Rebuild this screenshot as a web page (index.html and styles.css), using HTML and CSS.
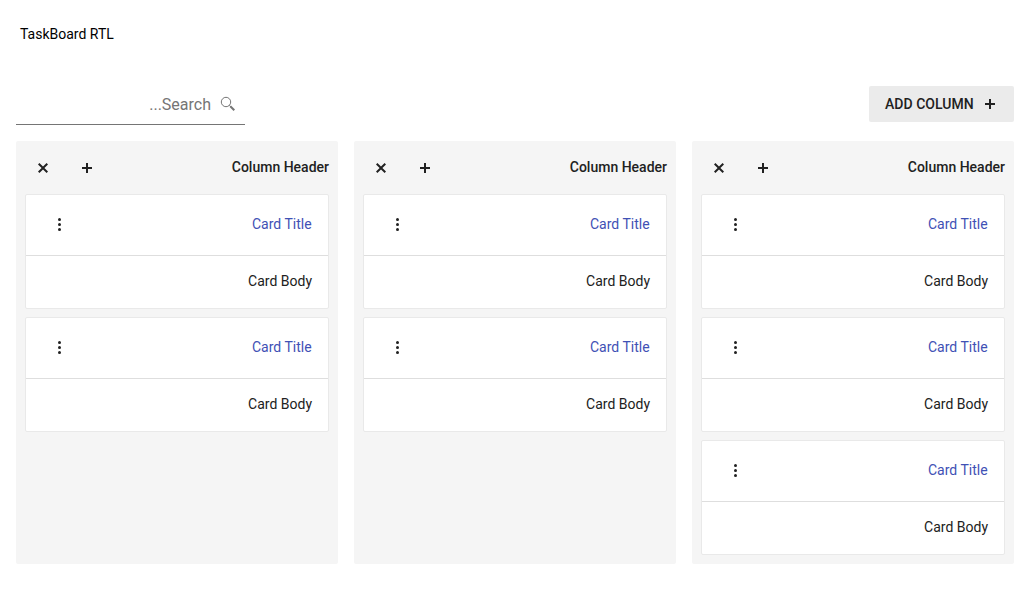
FILE: index.html
```html
<!DOCTYPE html>
<html lang="en">
<head>
<meta charset="utf-8">
<title>TaskBoard RTL</title>
<link rel="stylesheet" href="styles.css">
</head>
<body>
<svg class="sprite" aria-hidden="true">
  <symbol id="plus" viewBox="0 0 16 16"><path d="M7 3h2v4h4v2H9v4H7V9H3V7h4z"/></symbol>
  <symbol id="close" viewBox="0 0 16 16"><path d="M13 4.4 11.6 3 8 6.6 4.4 3 3 4.4 6.6 8 3 11.6 4.4 13 8 9.4l3.6 3.6 1.4-1.4L9.4 8z"/></symbol>
  <symbol id="more" viewBox="0 0 16 16"><circle cx="8.5" cy="3.5" r="1.5"/><circle cx="8.5" cy="8.5" r="1.5"/><circle cx="8.5" cy="13.5" r="1.5"/></symbol>
  <symbol id="search" viewBox="0 0 16 16"><circle cx="6" cy="6" r="4.7" fill="none" stroke="currentColor"/><path d="m9.3 9.3 1.4 1.4" fill="none" stroke="currentColor"/><path d="m10.3 10.3 4 4" fill="none" stroke="currentColor" stroke-width="2"/></symbol>
</svg>
<h1 class="title">TaskBoard RTL</h1>
<main class="taskboard">
  <div class="toolbar">
    <div class="search"><span>...Search</span><svg class="icon"><use href="#search"/></svg></div>
    <button class="add">ADD COLUMN<svg class="icon"><use href="#plus"/></svg></button>
  </div>
  <div class="columns" id="columns"></div>
</main>
<script src="board.js"></script>
</body>
</html>
```
FILE: board.js
```js
const icon = (name) => `<svg class="icon"><use href="#${name}"/></svg>`;
const card = `<article class="card">
  <header class="card-header">${icon('more')}<span>Card Title</span></header>
  <div class="card-body">Card Body</div>
</article>`;
document.getElementById('columns').innerHTML = [2, 2, 3].map((count) => `<section class="column">
  <header class="column-header"><span class="actions">${icon('close')}${icon('plus')}</span><span>Column Header</span></header>
  ${card.repeat(count)}
</section>`).join('');
```
FILE: styles.css
```css
* { box-sizing: border-box; }
body { margin: 0; background: #fff; color: #212121; font: 14px/20px Roboto, sans-serif; }
.sprite { display: none; }
.icon { width: 16px; height: 16px; fill: currentColor; flex: none; }
.title { margin: 0; padding: 24px 20px 0; height: 86px; font-size: 14px; line-height: 20px; font-weight: 400; color: #000; }
.taskboard { padding: 0 16px; }
.toolbar { display: flex; justify-content: space-between; height: 55px; }
.search { display: flex; justify-content: flex-end; align-items: center; gap: 9px; width: 229px; height: 39px; padding: 0 9px 2px 0; border-bottom: 1px solid #757575; color: #757575; font-size: 16px; }
.search span { padding-top: 2px; }
.add { display: flex; align-items: center; justify-content: space-between; width: 145px; height: 36px; padding: 0 16px; border: 0; border-radius: 2px; background: #ebebeb; color: #212121; font: 500 14px/20px Roboto, sans-serif; letter-spacing: 0.03px; }
.columns { display: grid; grid-template-columns: repeat(3, 322px); gap: 16px; height: 423px; }
.column { background: #f5f5f5; border-radius: 2px; padding: 0 9px; }
.column-header { display: flex; justify-content: space-between; align-items: flex-start; height: 53px; padding-top: 16px; font-weight: 500; }
.actions { display: flex; gap: 28px; padding: 3px 0 0 10px; }
.card { height: 115px; margin-bottom: 8px; border: 1px solid #e9e9e9; border-radius: 2px; background: #fff; }
.card-header { display: flex; justify-content: space-between; align-items: flex-start; height: 61px; padding: 19px 16px 0 25px; border-bottom: 1px solid #dedede; color: #3f51b5; }
.card-header span { width: 60px; white-space: nowrap; }
.card-header .icon { margin-top: 2px; color: #212121; }
.card-body { padding: 15px 16px; text-align: right; }
```
